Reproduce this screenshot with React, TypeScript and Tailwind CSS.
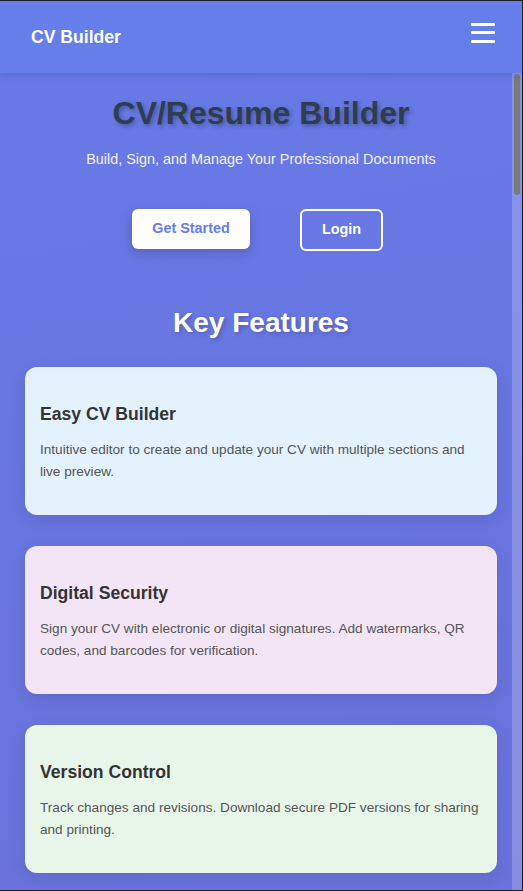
import React from 'react';

interface Feature {
    title: string;
    text: string;
    bg: string;
}

const FEATURES: Feature[] = [
    {
        title: 'Easy CV Builder',
        text: 'Intuitive editor to create and update your CV with multiple sections and live preview.',
        bg: 'bg-[#e3f2fd]',
    },
    {
        title: 'Digital Security',
        text: 'Sign your CV with electronic or digital signatures. Add watermarks, QR codes, and barcodes for verification.',
        bg: 'bg-[#f3e5f5]',
    },
    {
        title: 'Version Control',
        text: 'Track changes and revisions. Download secure PDF versions for sharing and printing.',
        bg: 'bg-[#e8f5e9]',
    },
];

const FeatureCard: React.FC<{ feature: Feature }> = ({ feature }) => (
    <div className={`${feature.bg} rounded-[12px] px-[15px] pt-[36px] pb-[32px] shadow-[0_4px_15px_rgba(0,0,0,0.1)]`}>
        <h3 className="text-[17.6px] leading-[22px] font-bold text-[#333]">{feature.title}</h3>
        <p className="mt-[14px] text-[13.6px] leading-[22px] text-[#555]">{feature.text}</p>
    </div>
);

const App: React.FC = () => {
    return (
        <div className="relative h-[891px] w-full overflow-hidden flex flex-col border-t border-r border-b border-[#1c1c28] font-['Liberation_Sans',Arial,sans-serif]">
            <header className="relative z-10 shrink-0 h-[72px] flex items-center justify-between pl-[31px] pr-[27px] bg-[#667eea] shadow-[0_2px_8px_rgba(0,0,0,0.12)]">
                <span className="text-[17.6px] font-bold text-white">CV Builder</span>
                <button className="flex flex-col gap-[5.5px] mb-[9px]" aria-label="Menu">
                    <span className="block w-[24px] h-[3px] bg-white rounded-[1px]" />
                    <span className="block w-[24px] h-[3px] bg-white rounded-[1px]" />
                    <span className="block w-[24px] h-[3px] bg-white rounded-[1px]" />
                </button>
            </header>

            <main className="flex-1 bg-[linear-gradient(170deg,#6879e6_0%,#6a72db_100%)]">
                <section className="text-center pt-[22px]">
                    <h1 className="text-[32px] leading-[37px] font-bold text-[#2c3e50] [text-shadow:2px_2px_4px_rgba(0,0,0,0.3)]">
                        CV/Resume Builder
                    </h1>
                    <p className="mt-[18px] text-[14.4px] leading-[18px] text-white/90">
                        Build, Sign, and Manage Your Professional Documents
                    </p>
                    <div className="mt-[41px] flex items-start justify-center gap-[50px] pr-[7px]">
                        <button className="w-[118px] h-[40px] rounded-[6px] bg-white text-[14.4px] font-bold text-[#667eea] shadow-[0_4px_12px_rgba(0,0,0,0.18)]">
                            Get Started
                        </button>
                        <button className="w-[83px] h-[42px] rounded-[6px] border-2 border-white text-[14.4px] font-bold text-white">
                            Login
                        </button>
                    </div>
                </section>

                <section className="mt-[56px] px-[25px]">
                    <h2 className="text-center text-[28px] leading-[32px] font-bold text-white [text-shadow:2px_2px_4px_rgba(0,0,0,0.2)]">
                        Key Features
                    </h2>
                    <div className="mt-[28px] flex flex-col gap-[31px]">
                        {FEATURES.map(f => <FeatureCard key={f.title} feature={f} />)}
                    </div>
                </section>
            </main>

            {/* scrollbar overlay */}
            <div className="absolute right-0 top-[72px] bottom-0 w-[10px] bg-white/20">
                <div className="mx-auto mt-[1px] w-[6px] h-[121px] rounded-[3px] bg-[#7a7a7a]" />
            </div>
        </div>
    );
};

export default App;
